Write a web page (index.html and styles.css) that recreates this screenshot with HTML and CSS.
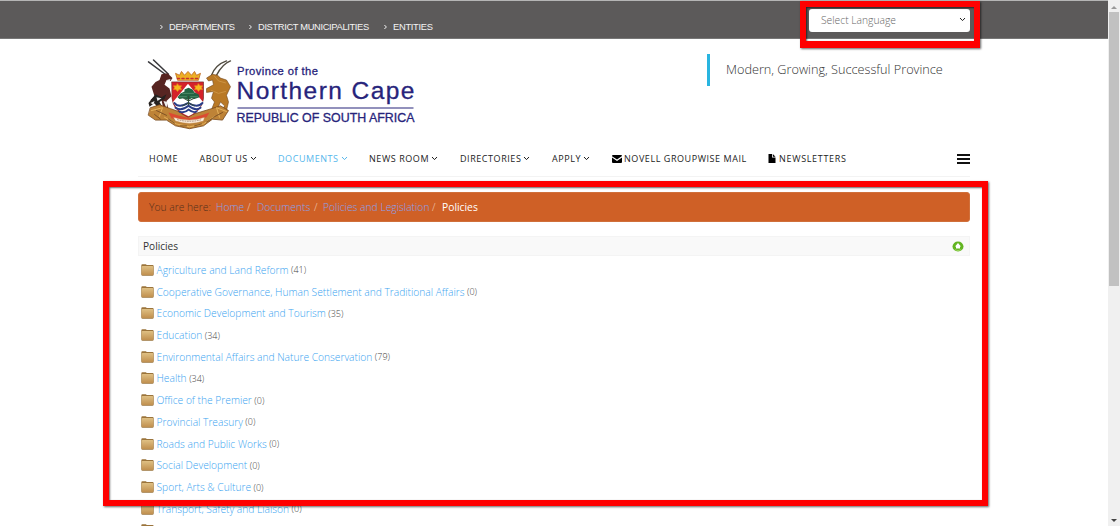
FILE: index.html
```html
<!DOCTYPE html>
<html lang="en">
<head>
<meta charset="utf-8">
<title>Policies - Northern Cape</title>
<link rel="stylesheet" href="styles.css">
</head>
<body>
<svg width="0" height="0" class="defs">
  <defs>
    <linearGradient id="fold" x1="0" y1="0" x2="0" y2="1"><stop offset="0" stop-color="#dfc084"/><stop offset="1" stop-color="#c08f4e"/></linearGradient>
    <symbol id="folder" viewBox="0 0 13 12"><path d="M.3 1.6Q.3.3 1.4.3H4.8L5.8 1.1H11.6Q12.7 1.1 12.7 2.4V10.2Q12.7 11.7 11.4 11.7H1.6Q.3 11.7.3 10.2Z" fill="#9b743b"/><path d="M.7 3Q.7 2 1.7 2H11.3Q12.3 2 12.3 3V9.9Q12.3 11.1 11.2 11.1H1.8Q.7 11.1.7 9.9Z" fill="url(#fold)"/></symbol>
    <symbol id="chev" viewBox="0 0 7 5"><path d="M1 1L3.5 3.6L6 1" fill="none" stroke="currentColor" stroke-width="1"/></symbol>
    <symbol id="right" viewBox="0 0 5 6"><path d="M1.4 1L3.4 3L1.4 5" fill="none" stroke="currentColor" stroke-width="1"/></symbol>
  </defs>
</svg>
<div class="window">
  <div class="page">
    <header class="topbar">
      <nav class="toplinks">
        <a class="t1"><svg><use href="#right"/></svg><span>DEPARTMENTS</span></a>
        <a class="t2"><svg><use href="#right"/></svg><span>DISTRICT MUNICIPALITIES</span></a>
        <a class="t3"><svg><use href="#right"/></svg><span>ENTITIES</span></a>
      </nav>
      <div class="select"><span>Select Language</span><svg><use href="#chev"/></svg></div>
    </header>
    <div class="brand">
      <svg class="logo" width="290" height="80" viewBox="0 0 290 80">
        <g stroke-linejoin="round" stroke-linecap="round" transform="translate(.5 3) scale(1 .955)">
          <path d="M2 3L20 17M7 1L22 16" stroke="#39383c" stroke-width="1.5" fill="none"/>
          <path d="M15 16L21 15L26 20L24 23L20 22L18 27L23 31L25 39L20 44L22 53L17 53L15 43L7 47L4 43L8 39L5 29L9 24L13 22Z" fill="#572522"/>
          <path d="M9 37L15 40L20 37L18 42L13 45L18 54L13 55L8 46L3 50L2 46Z" fill="#25211f"/>
          <path d="M10 40L15 41L11 44ZM20 22L24 21L23 24ZM17 44L21 45L20 52ZM4 46L8 44L7 48ZM11 49L14 48L16 53Z" fill="#eee"/>
          <path d="M84 2Q76 5 70 17M80 2Q69 6 65 17" stroke="#514c41" stroke-width="1.4" fill="none"/>
          <path d="M71 17L66 16L60 20L62 23L66 22L67 27L60 31L60 35L67 34L65 41L68 45L65 53L70 54L74 45L78 49L76 54L80 54L82 45L80 38L84 29L80 22L74 20Z" fill="#b97926" stroke="#70451b" stroke-width=".6"/>
          <path d="M68 18L72 23L79 25M65 33L72 36L79 34" fill="none" stroke="#d19a4a" stroke-width=".8"/>
          <path d="M4 51L13 48L24 52L43 59L65 52L74 49L82 54L76 64L66 63L57 70L43 73L29 70L20 64L9 64L2 59Z" fill="#be8337" stroke="#754518" stroke-width=".8"/>
          <path d="M5 54L16 51L13 60M80 55L70 51L73 61M18 61L30 68L43 71L57 68L68 60" fill="none" stroke="#e5b35c" stroke-width="1"/>
          <path d="M8 58L14 63M10 54L20 59M76 56L67 61M22 63L28 67M60 66L66 62M34 70H40M48 70L55 68" stroke="#764c22" stroke-width=".9"/>
          <path d="M25.500 24H57V41Q56 54 41.500 61Q26.500 54 25.500 41Z" fill="#d4222b" stroke="#712d28" stroke-width=".7"/>
          <path d="M41.500 26L56.500 45Q52 55 42 60Q31 55 26.500 45Z" fill="#fff"/>
          <path d="M28 46Q32 52 42 46Q51 52 56 46M29 51Q35 55 42 49Q49 55 54 51M33 55Q38 57 42 53Q47 57 50 55" fill="none" stroke="#293c87" stroke-width="2"/>
          <path d="M42 30L46 32L48 35L52 37L53 40L48 42L45 41L42 43L37 41L33 42L31 40L34 36L38 34L38 32Z" fill="#236343"/>
          <path d="M42 39V48M42 44L37 41M42 44L48 41M42 46L36 49M42 46L48 49" stroke="#334c37" stroke-width="1"/>
          <path d="M36 36H47M33 39.500H40M44 39.500H51" stroke="#69a483" stroke-width=".6"/>
          <path d="M31 26L32.5 28L35 28L34 30L35 32L32.5 32L31 34L29.5 32L27 32L28 30L27 28L29.5 28ZM52 26L53.500 28L56 28L55 30L56 32L53.500 32L52 34L50.500 32L48 32L49 30L48 28L50.500 28Z" fill="#f5b91e" stroke="#e98218" stroke-width=".7"/>
          <path d="M31 22L29 15L33 17L35 13L38 17L41.500 13L45 17L48 13L50 17L54 15L52 22Z" fill="#edaf24" stroke="#bd6420" stroke-width=".8"/>
          <path d="M31 20.500H52" stroke="#c6302d" stroke-width="1.5" stroke-dasharray="2 2.500"/>
          <path d="M22 56L31 59L43 62L55 59L63 56L60 61L52 64L43 66L32 64L25 62Z" fill="#dc4a31"/>
          <path d="M27 61Q43 67 58 61L57 65Q43 70 29 65Z" fill="#fff1df" stroke="#bb8247" stroke-width=".5"/>
          <path d="M31 63.500Q43 67 55 63.500" stroke="#99776b" stroke-width=".8" stroke-dasharray="1 1.500" fill="none"/>
        </g>
        <g class="logotext">
          <text x="91" y="18.5" font-size="11.2" textLength="81">Province of the</text>
          <text x="90.500" y="43" font-size="24.500" textLength="178">Northern Cape</text>
          <text x="90.500" y="66" font-size="12.4" textLength="178">REPUBLIC OF SOUTH AFRICA</text>
          <path d="M91.500 52H267.500" stroke="#27247b" stroke-width="1.2"/>
        </g>
      </svg>
      <div class="slogan">Modern, Growing, Successful Province</div>
    </div>
    <nav class="menu">
      <a class="m1">HOME</a>
      <a class="m2">ABOUT US<svg class="c"><use href="#chev"/></svg></a>
      <a class="m3">DOCUMENTS<svg class="c"><use href="#chev"/></svg></a>
      <a class="m4">NEWS ROOM<svg class="c"><use href="#chev"/></svg></a>
      <a class="m5">DIRECTORIES<svg class="c"><use href="#chev"/></svg></a>
      <a class="m6">APPLY<svg class="c"><use href="#chev"/></svg></a>
      <a class="m7"><svg class="mail" viewBox="0 0 10 8"><path d="M0 1Q0 0 1 0H9Q10 0 10 1L5 4.6L0 1.2ZM0 2.5L5 6L10 2.5V7Q10 8 9 8H1Q0 8 0 7Z"/></svg>NOVELL GROUPWISE MAIL</a>
      <a class="m8"><svg class="file" viewBox="0 0 8 9"><path d="M.5 0H4V3.5H7.5V9H.5ZM4.8 0L7.5 2.8H4.8Z"/></svg>NEWSLETTERS</a>
      <div class="burger"><i></i><i></i><i></i></div>
    </nav>
    <main>
      <div class="crumbs"><span class="b1">You are here:</span><a class="b2">Home</a><i class="s1">/</i><a class="b3">Documents</a><i class="s2">/</i><a class="b4">Policies and Legislation</a><i class="s3">/</i><span class="b5">Policies</span></div>
      <div class="heading"><span>Policies</span>
        <svg width="12" height="11" viewBox="0 0 12 11"><ellipse cx="6" cy="5.5" rx="5.5" ry="5.1" fill="#62b421"/><path d="M2 7.4Q6 10.5 10 7.4Q8.5 9.8 6 9.8Q3.5 9.8 2 7.4Z" fill="#b5e778"/><path d="M6 1.9L9 5.5H8V7.6H4V5.5H3Z" fill="#fff"/></svg>
      </div>
      <ul class="list">
        <li><svg><use href="#folder"/></svg><a>Agriculture and Land Reform</a><small>(41)</small></li>
        <li><svg><use href="#folder"/></svg><a>Cooperative Governance, Human Settlement and Traditional Affairs</a><small>(0)</small></li>
        <li><svg><use href="#folder"/></svg><a>Economic Development and Tourism</a><small>(35)</small></li>
        <li><svg><use href="#folder"/></svg><a>Education</a><small>(34)</small></li>
        <li><svg><use href="#folder"/></svg><a>Environmental Affairs and Nature Conservation</a><small>(79)</small></li>
        <li><svg><use href="#folder"/></svg><a>Health</a><small>(34)</small></li>
        <li><svg><use href="#folder"/></svg><a>Office of the Premier</a><small>(0)</small></li>
        <li><svg><use href="#folder"/></svg><a>Provincial Treasury</a><small>(0)</small></li>
        <li><svg><use href="#folder"/></svg><a>Roads and Public Works</a><small>(0)</small></li>
        <li><svg><use href="#folder"/></svg><a>Social Development</a><small>(0)</small></li>
        <li><svg><use href="#folder"/></svg><a>Sport, Arts &amp; Culture</a><small>(0)</small></li>
        <li><svg><use href="#folder"/></svg><a>Transport, Safety and Liaison</a><small>(0)</small></li>
        <li><svg><use href="#folder"/></svg></li>
      </ul>
    </main>
  </div>
  <aside class="scrollbar"><svg width="12" height="12" viewBox="0 0 12 12"><path d="M3 9L6 6L9 9Z" fill="#999"/></svg><div class="thumb"></div><svg width="12" height="12" viewBox="0 0 12 12"><path d="M3 5L6 8L9 5Z" fill="#444"/></svg></aside>
</div>
<div class="mark mark-lang"></div>
<div class="mark mark-list"></div>
</body>
</html>
```

FILE: styles.css
```css
* { box-sizing: border-box; }
body { margin: 0; background: #fff; font-family: "Open Sans", sans-serif; overflow: hidden; }
.defs { display: block; position: absolute; }
.window { display: flex; height: 526px; overflow: hidden; }
.page { width: 1108px; flex: none; height: 526px; overflow: hidden; }
.topbar { height: 39px; background: #5c5a5a; border-top: 1px solid #b5b5b5; border-bottom: 1px solid #777; padding: 8px 138px 0 159px; display: flex; justify-content: space-between; color: #f4f4f4; }
.toplinks { display: flex; align-items: flex-start; padding-top: 12px; font: 9.35px/12px "Liberation Sans", sans-serif; white-space: nowrap; }
.toplinks a { display: flex; align-items: center; gap: 5px; }
.toplinks svg { width: 5px; height: 6px; flex: none; }
.t1 { width: 89px; letter-spacing: -.37px; }
.t2 { width: 135px; letter-spacing: -.36px; }
.t3 { letter-spacing: -.3px; }
.select { width: 161px; height: 23px; background: #fff; border-radius: 3px; display: flex; align-items: center; justify-content: space-between; padding: 0 4px 2px 12px; color: #666; font-size: 10.3px; font-weight: 300; }
.select svg { width: 7px; height: 5px; color: #222; }
.brand { display: flex; justify-content: space-between; padding: 15px 138px 0 146px; height: 105px; }
.logo { margin-top: 2px; display: block; overflow: visible; }
.logotext { font-family: "Liberation Sans", sans-serif; fill: #27247b; stroke: #27247b; stroke-width: .3px; }
.slogan { border-left: 3px solid #29b5e0; height: 32px; line-height: 31px; width: 263px; padding-left: 16px; font-size: 12.7px; font-weight: 300; color: #333; white-space: nowrap; }
.menu { height: 33px; margin: 0 138px; padding: 0 0 3px 11px; border-bottom: 1px solid #f3f3f3; display: flex; align-items: center; font-size: 9px; letter-spacing: .56px; color: #1c1c1c; white-space: nowrap; }
.menu a { display: flex; align-items: center; flex: none; height: 28px; }
.menu .c { width: 7px; height: 5px; margin-left: 2px; }
.m1 { width: 50.5px; } .m2 { width: 78.5px; } .m3 { width: 91px; } .m4 { width: 91px; }
.m5 { width: 92px; } .m6 { width: 60px; } .m7 { width: 156px; }
.menu .m3 { color: #56b7ec; }
.menu .m8 { letter-spacing: .68px; }
.mail { width: 10px; height: 8px; margin-right: 2px; }
.file { width: 8px; height: 9px; margin-right: 3px; }
.burger { margin-left: auto; width: 13px; height: 10px; display: flex; flex-direction: column; justify-content: space-between; }
.burger i { height: 2px; background: #111; }
main { margin: 15px 138px 0; }
.crumbs { height: 30px; background: #cf6026; border: 1px solid #d0703b; border-radius: 3px; display: flex; align-items: center; padding-left: 10px; font-size: 10.3px; font-weight: 300; color: #54301c; white-space: nowrap; }
.crumbs a { color: #86a0f0; }
.crumbs i { font-style: normal; color: #f0d0bf; }
.crumbs .b5 { color: #fff; font-weight: 400; }
.b1 { width: 67px; } .b2 { width: 31px; } .s1 { width: 10px; } .b3 { width: 57px; } .s2 { width: 9px; } .b4 { width: 109px; } .s3 { width: 10px; }
.heading { margin-top: 14px; height: 20px; background: #f9f9f9; border: 1px solid #f4f4f4; display: flex; align-items: center; justify-content: space-between; padding: 0 5px 0 4px; font-size: 10.1px; color: #333; }
.list { list-style: none; margin: 3px 0 0; padding: 0 0 0 3px; }
.list li { display: flex; align-items: center; height: 21.72px; font-size: 10.22px; font-weight: 300; white-space: nowrap; }
.list svg { width: 13px; height: 12px; margin-right: 2.5px; flex: none; }
.list a { color: #3ba4f0; }
.list small { font-size: 9px; color: #444; margin-left: 2.5px; }
.scrollbar { width: 12px; flex: none; height: 526px; background: #f0f0f0; display: flex; flex-direction: column; align-items: center; }
.scrollbar svg { flex: none; }
.thumb { width: 10px; height: 274px; background: #c1c1c1; margin-bottom: auto; }
.mark { position: absolute; border: 6px solid #fe0000; box-shadow: 1px 1px 2px rgba(0,0,0,.6), inset 1px 1px 2px rgba(0,0,0,.6); pointer-events: none; }
.mark-lang { left: 800px; top: 1px; width: 180px; height: 47px; border-bottom-width: 7px; }
.mark-list { left: 103px; top: 181px; width: 885px; height: 325px; }
```
